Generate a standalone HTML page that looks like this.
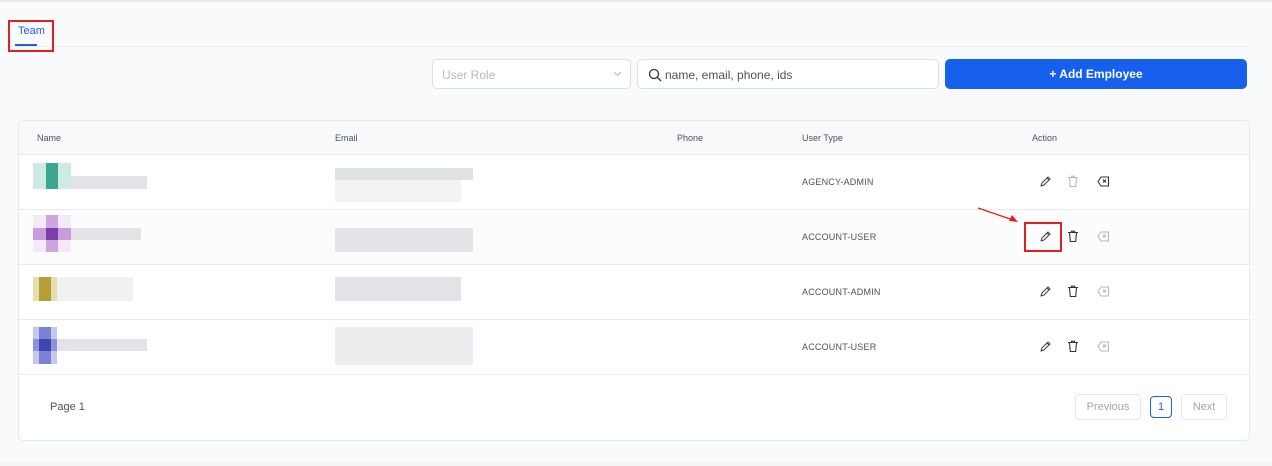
<!DOCTYPE html>
<html><head><meta charset="utf-8"><style>
*{box-sizing:border-box;margin:0;padding:0}
body{width:1272px;height:466px;background:#f9fafb;font-family:"Liberation Sans",sans-serif;position:relative;overflow:hidden}
.a{position:absolute}
.topline{left:0;top:0;width:1272px;height:2px;background:#e8e9ec}
.tab{left:18px;top:25px;font-size:11px;color:#1b5ef0}
.tabul{left:15px;top:44px;width:22px;height:2px;background:#1b5ef0}
.redbox{border:2px solid #e0201e}
.sep{left:10px;top:46px;width:1240px;height:1px;background:#eceef1}
.input{background:#fff;border:1px solid #dcdfe4;border-radius:5px;font-size:12px}
.btn{left:945px;top:59px;width:302px;height:30px;background:#1760ee;border-radius:5px;color:#fff;font-size:12px;font-weight:bold;text-align:center;line-height:30px}
.card{left:18px;top:120px;width:1232px;height:321px;background:#fff;border:1px solid #e6e8ec;border-radius:5px;overflow:hidden}
.th{top:0;left:0;width:100%;height:34px;background:#f8f9fb;border-bottom:1px solid #e8eaee}
.hd{font-size:9px;color:#4b5160;top:12px}
.row{left:0;width:100%;height:55px;border-bottom:1px solid #e8eaee}
.ut{font-size:9px;color:#4b5160;left:783px;top:22px;letter-spacing:.2px}
.px{position:absolute}
.pg{border:1px solid #e5e7eb;border-radius:4px;font-size:11px;color:#a0a4ad;text-align:center;line-height:24px;height:26px}
</style></head><body>
<div class="a topline"></div>
<div class="a sep"></div>
<div class="a tab">Team</div>
<div class="a tabul"></div>
<div class="a redbox" style="left:8px;top:20px;width:46px;height:32px"></div>

<div class="a input" style="left:432px;top:59px;width:199px;height:30px;color:#b6bac2;padding:8px 0 0 9px">User Role
<svg class="a" style="left:180px;top:11px" width="9" height="6" viewBox="0 0 9 6"><path d="M1 1l3.5 3.5L8 1" fill="none" stroke="#b6bac2" stroke-width="1"/></svg></div>
<div class="a input" style="left:637px;top:59px;width:302px;height:30px;color:#4b5160;padding:8px 0 0 27px">name, email, phone, ids
<svg class="a" style="left:10px;top:8px" width="14" height="14" viewBox="0 0 14 14"><circle cx="6" cy="6" r="4.5" fill="none" stroke="#333" stroke-width="1.3"/><path d="M9.3 9.3L13 13" stroke="#333" stroke-width="1.3"/></svg></div>
<div class="a btn">+ Add Employee</div>

<div class="a card">
<div class="a th">
<div class="a hd" style="left:18px">Name</div>
<div class="a hd" style="left:316px">Email</div>
<div class="a hd" style="left:658px">Phone</div>
<div class="a hd" style="left:783px">User Type</div>
<div class="a hd" style="left:1013px">Action</div>
</div>

<!-- row1 -->
<div class="a row" style="top:34px">
<div class="px" style="left:14px;top:8px;width:38px;height:26px;background:#cdebe3"></div>
<div class="px" style="left:27px;top:8px;width:12px;height:26px;background:#3aa890"></div>
<div class="px" style="left:52px;top:21px;width:76px;height:13px;background:#e2e3e7"></div>
<div class="px" style="left:316px;top:13px;width:138px;height:12px;background:#e1e2e6"></div>
<div class="px" style="left:316px;top:25px;width:126px;height:22px;background:#f2f3f5"></div>
<div class="a ut">AGENCY-ADMIN</div>
</div>
<!-- row2 -->
<div class="a row" style="top:89px;background:#fcfcfd">
<div class="px" style="left:14px;top:5px;width:38px;height:37px;background:#f3e9f7"></div>
<div class="px" style="left:27px;top:5px;width:12px;height:37px;background:#cda6e0"></div>
<div class="px" style="left:14px;top:18px;width:38px;height:12px;background:#c99cde"></div>
<div class="px" style="left:27px;top:18px;width:12px;height:12px;background:#7d3ea8"></div>
<div class="px" style="left:52px;top:18px;width:70px;height:12px;background:#e2e3e7"></div>
<div class="px" style="left:316px;top:18px;width:138px;height:24px;background:#e2e3e7"></div>
<div class="a ut">ACCOUNT-USER</div>
</div>
<!-- row3 -->
<div class="a row" style="top:144px">
<div class="px" style="left:14px;top:12px;width:24px;height:24px;background:#e6dcae"></div>
<div class="px" style="left:20px;top:12px;width:12px;height:24px;background:#b59e35"></div>
<div class="px" style="left:38px;top:12px;width:76px;height:24px;background:#f0f1f3"></div>
<div class="px" style="left:316px;top:12px;width:126px;height:24px;background:#e2e3e7"></div>
<div class="a ut">ACCOUNT-ADMIN</div>
</div>
<!-- row4 -->
<div class="a row" style="top:199px">
<div class="px" style="left:14px;top:7px;width:24px;height:37px;background:#c4c8ee"></div>
<div class="px" style="left:20px;top:7px;width:12px;height:37px;background:#7b82d6"></div>
<div class="px" style="left:14px;top:19px;width:24px;height:12px;background:#8c92dc"></div>
<div class="px" style="left:20px;top:19px;width:12px;height:12px;background:#3d47ad"></div>
<div class="px" style="left:38px;top:19px;width:90px;height:12px;background:#e2e3e7"></div>
<div class="px" style="left:316px;top:7px;width:138px;height:38px;background:#ededf0"></div>
<div class="a ut">ACCOUNT-USER</div>
</div>

<div class="a" style="left:31px;top:280px;font-size:11px;color:#4b5160">Page 1</div>
<div class="a pg" style="left:1056px;top:273px;width:66px">Previous</div>
<div class="a pg" style="left:1131px;top:275px;width:22px;height:22px;line-height:20px;border-color:#1b5ef0;color:#1b5ef0;border-width:1.5px">1</div>
<div class="a pg" style="left:1162px;top:273px;width:46px">Next</div>
</div>

<!-- action icons -->
<svg class="a" style="left:1038px;top:174px" width="80" height="200" viewBox="0 0 80 200">
<defs>
<g id="pen"><path d="M2 11l1-3 6-6 2 2-6 6z M8 3l2 2" fill="none" stroke-width="1.1" stroke-linejoin="round"/></g>
<g id="bin"><path d="M1 2.5h10 M4.5 2.5v-1.3h3v1.3 M2.5 2.5l.8 9h5.4l.8-9" fill="none" stroke-width="1.1"/></g>
<g id="del"><path d="M4 1.5h7.5v9H4L1 6z M6 4l3 3 M9 4l-3 3" fill="none" stroke-width="1.1" stroke-linejoin="round"/></g>
</defs>
<use href="#pen" x="1" y="1" stroke="#444"/><use href="#bin" x="29" y="1" stroke="#b5b8be"/><use href="#del" x="59" y="1.5" stroke="#333"/>
<use href="#pen" x="1" y="56" stroke="#444"/><use href="#bin" x="29" y="56" stroke="#333"/><use href="#del" x="59" y="56.5" stroke="#b5b8be"/>
<use href="#pen" x="1" y="111" stroke="#444"/><use href="#bin" x="29" y="111" stroke="#333"/><use href="#del" x="59" y="111.5" stroke="#b5b8be"/>
<use href="#pen" x="1" y="166" stroke="#444"/><use href="#bin" x="29" y="166" stroke="#333"/><use href="#del" x="59" y="166.5" stroke="#b5b8be"/>
</svg>
<div class="a redbox" style="left:1024px;top:222px;width:38px;height:30px"></div>
<svg class="a" style="left:975px;top:205px" width="50" height="20" viewBox="0 0 50 20"><path d="M3 3L38 15" stroke="#e0201e" stroke-width="1.3"/><path d="M43 17l-9-1 3-6z" fill="#e0201e"/></svg>
<div class="a" style="left:0;top:462px;width:1272px;height:4px;background:#f3f4f6"></div>
</body></html>
